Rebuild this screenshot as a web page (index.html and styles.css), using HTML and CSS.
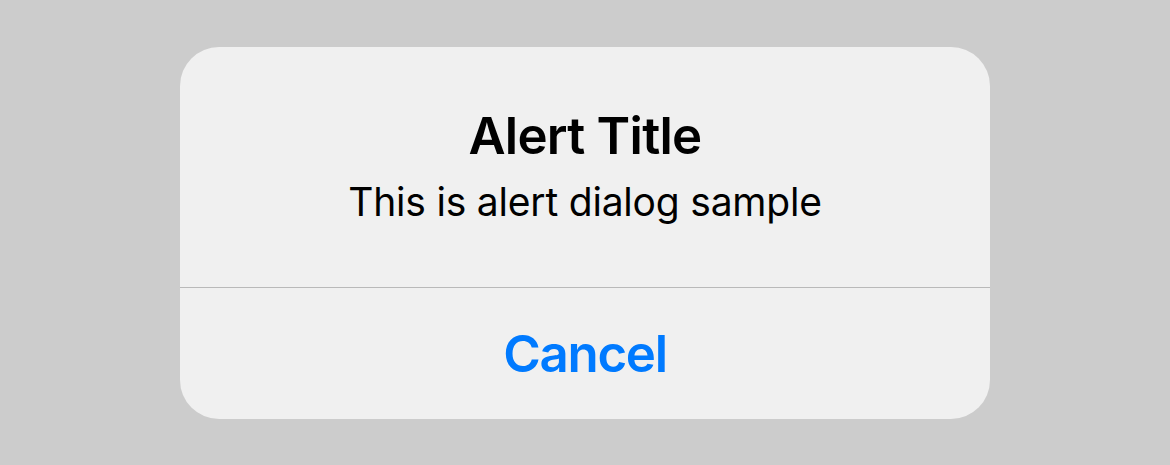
FILE: index.html
```
<!doctype html>
<html>
    <head>
        <meta http-equiv="Content-Type" content="text/html; charset=utf-8">
        <link rel="stylesheet" href="styles.css">
    </head>
    <body>
        <div class="alert">
            <div class="alert-body">
                <div class="alert-title">Alert Title</div>
                <div class="alert-message">This is alert dialog sample</div>
            </div>
            <div class="alert-actions">
                <div class="alert-button">Cancel</div>
            </div>
        </div>
    </body>
</html>
```
FILE: styles.css
```
html, body{
    height: 100%;
}
body{
    margin: 0;
    background: #cccccc;
    font-family: Inter, "Noto Sans", sans-serif;
    display: flex;
    align-items: center;
    justify-content: center;
}
.alert{
    width: 810px;
    background: #f0f0f0;
    border-radius: 39px;
    overflow: hidden;
    text-align: center;
}
.alert-body{
    padding: 58px 30px 54px;
    border-bottom: 1px solid #b9b9b9;
}
.alert-title{
    font-size: 51px;
    line-height: 62px;
    font-weight: 600;
    letter-spacing: -0.75px;
    color: #000;
}
.alert-message{
    margin-top: 4px;
    font-size: 39px;
    line-height: 62px;
    letter-spacing: -0.2px;
    color: #000;
}
.alert-button{
    height: 131px;
    line-height: 131px;
    font-size: 51px;
    font-weight: 600;
    letter-spacing: -1.3px;
    color: #007aff;
}
```
